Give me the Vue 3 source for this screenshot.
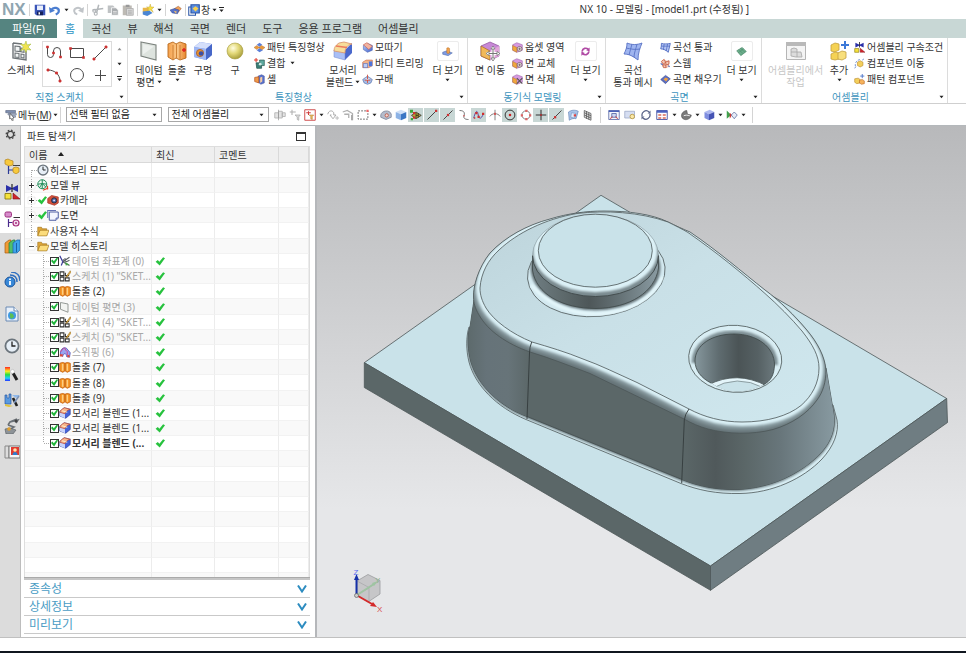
<script setup>
import { ref } from 'vue'

const quick = [
  { icon: 'save' }, { icon: 'undo', caret: true }, { icon: 'redo', sep: true },
  { icon: 'cut' }, { icon: 'copy' }, { icon: 'paste', sep: true },
  { icon: 'touch-star', caret: true, sep: true }, { icon: 'touch', sep: true },
]

const tabs = ['홈', '곡선', '뷰', '해석', '곡면', '렌더', '도구', '응용 프로그램', '어셈블리']
const activeTab = ref('홈')

const gallery = ['profile', 'rect', 'line', 'arc', 'circle', 'plus']

const groups = [
  {
    id: 'feature', label: '특징형상',
    items: [
      { kind: 'big', icon: 'datum', lines: ['데이텀', '평면'], caret: 'inline' },
      { kind: 'big', icon: 'extrude', lines: ['돌출'], caret: 'below' },
      { kind: 'big', icon: 'hole', lines: ['구멍'] },
      { kind: 'big', icon: 'sphere', lines: ['구'] },
      { kind: 'list', entries: [
        { icon: 'pattern', text: '패턴 특징형상' },
        { icon: 'unite', text: '결합', caret: true },
        { icon: 'shell', text: '셸' },
      ] },
      { kind: 'big', icon: 'blend', lines: ['모서리', '블렌드'], caret: 'inline' },
      { kind: 'list', entries: [
        { icon: 'chamfer', text: '모따기' },
        { icon: 'trim', text: '바디 트리밍' },
        { icon: 'draft', text: '구배' },
      ] },
      { kind: 'more', icon: 'more-feature' },
    ],
  },
  {
    id: 'sync', label: '동기식 모델링',
    items: [
      { kind: 'big', icon: 'move-face', lines: ['면 이동'] },
      { kind: 'list', entries: [
        { icon: 'face-a', text: '옵셋 영역' },
        { icon: 'face-a', text: '면 교체' },
        { icon: 'face-x', text: '면 삭제' },
      ] },
      { kind: 'more', icon: 'more-sync' },
    ],
  },
  {
    id: 'surface', label: '곡면',
    items: [
      { kind: 'big', icon: 'mesh', lines: ['곡선', '통과 메시'] },
      { kind: 'list', entries: [
        { icon: 'mesh-s', text: '곡선 통과' },
        { icon: 'swept', text: '스웹' },
        { icon: 'fill', text: '곡면 채우기' },
      ] },
      { kind: 'more', icon: 'more-surface' },
    ],
  },
  {
    id: 'assembly', label: '어셈블리',
    items: [
      { kind: 'big', icon: 'asm-work', lines: ['어셈블리에서', '작업'], disabled: true },
      { kind: 'big', icon: 'asm-add', lines: ['추가'], caret: 'below' },
      { kind: 'list', entries: [
        { icon: 'constraint', text: '어셈블리 구속조건' },
        { icon: 'comp-move', text: '컴포넌트 이동' },
        { icon: 'comp-pattern', text: '패턴 컴포넌트' },
      ] },
    ],
  },
]

const tools = [
  { icon: 't-sel' }, { icon: 't-arrow' }, { icon: 't-red', caret: true },
  { icon: 't-down' }, { icon: 't-corner' }, { icon: 't-dash', caret: true },
  { icon: 't-dome' }, { icon: 'cube-blue' },
  { icon: 't-snap', on: true }, { icon: 't-end', on: true }, { icon: 't-mid', on: true }, { icon: 't-curve' },
  { icon: 't-spline', on: true }, { icon: 't-cross' }, { icon: 't-center', on: true }, { icon: 't-quad' },
  { icon: 't-plus', on: true }, { icon: 't-oncurve', on: true }, { icon: 't-face' }, { icon: 't-grid', sep: true },
  { icon: 't-fit', wide: true }, { icon: 't-zoom', wide: true }, { icon: 't-rotate', wide: true }, { icon: 't-layout', wide: true, caret: true },
  { icon: 't-render', caret: true }, { icon: 'cube-deep', caret: true }, { icon: 't-clip', caret: true, sep: true },
]

const resources = [
  { id: 'gear', name: '설정' }, { id: 'r-asm', name: '어셈블리 탐색기' }, { id: 'constraint', name: '구속조건 탐색기' },
  { id: 'r-part', name: '파트 탐색기' }, { id: 'r-books', name: '재사용 라이브러리' }, { id: 'r-info', name: 'HD3D 도구' },
  { id: 'r-web', name: '웹 브라우저' }, { id: 'clock', name: '히스토리' }, { id: 'r-color', name: '시스템 재료' },
  { id: 'r-wizard', name: '프로세스 스튜디오' }, { id: 'r-robot', name: '가공 마법사' }, { id: 'r-roles', name: '역할' },
]

const rows = [
  { twig: 'tw-first', icon: 'clock', text: '히스토리 모드' },
  { twig: 'tw-plus', icon: 'globe', text: '모델 뷰' },
  { twig: 'tw-plus', tick: true, icon: 'camera', text: '카메라' },
  { twig: 'tw-plus', tick: true, icon: 'sheet', text: '도면' },
  { twig: 'tw-mid', icon: 'folder', text: '사용자 수식' },
  { twig: 'tw-minus', icon: 'folder', text: '모델 히스토리' },
  { child: true, icon: 'csys', text: '데이텀 좌표계 (0)', dim: true },
  { child: true, icon: 'sk', text: '스케치 (1) "SKET...', dim: true },
  { child: true, icon: 'ext-s', text: '돌출 (2)' },
  { child: true, icon: 'plane-s', text: '데이텀 평면 (3)', dim: true },
  { child: true, icon: 'sk', text: '스케치 (4) "SKET...', dim: true },
  { child: true, icon: 'sk', text: '스케치 (5) "SKET...', dim: true },
  { child: true, icon: 'sweep-s', text: '스위핑 (6)', dim: true },
  { child: true, icon: 'ext-s', text: '돌출 (7)' },
  { child: true, icon: 'ext-s', text: '돌출 (8)' },
  { child: true, icon: 'ext-s', text: '돌출 (9)' },
  { child: true, icon: 'blend-s', text: '모서리 블렌드 (1...' },
  { child: true, icon: 'blend-s', text: '모서리 블렌드 (1...' },
  { child: true, icon: 'blend-s', text: '모서리 블렌드 (...', bold: true, last: true },
]
const blanks = 9

const sections = ['종속성', '상세정보', '미리보기']
</script>

<template>
  <div class="app">
    <svg class="sprite" width="0" height="0" aria-hidden="true">
      <defs>
        <linearGradient id="gOr" x1="0" x2="1"><stop offset="0" stop-color="#f6a04a" /><stop offset=".5" stop-color="#fbc98a" /><stop offset="1" stop-color="#e8862c" /></linearGradient>
        <radialGradient id="gSph" cx=".38" cy=".32" r=".7"><stop offset="0" stop-color="#fffde0" /><stop offset=".5" stop-color="#e2d878" /><stop offset="1" stop-color="#a89e3c" /></radialGradient>
        <linearGradient id="gBl" x1="0" y1="0" x2="1" y2="1"><stop offset="0" stop-color="#b9cdf8" /><stop offset="1" stop-color="#3f60cc" /></linearGradient>
        <linearGradient id="gRain" x1="0" y1="0" x2="0" y2="1"><stop offset="0" stop-color="#f22" /><stop offset=".3" stop-color="#fe2" /><stop offset=".55" stop-color="#2d4" /><stop offset=".8" stop-color="#2cf" /><stop offset="1" stop-color="#23f" /></linearGradient>
      </defs>
      <symbol id="caret" viewBox="0 0 6 4"><path d="M0.6 0.6h4.8L3 3.4z" fill="#222" /></symbol>
      <symbol id="caret-bar" viewBox="0 0 6 7"><path d="M0 0h6v1H0zM0.500 3h5L3 6z" fill="#222" /></symbol>
      <symbol id="save" viewBox="0 0 16 16"><path d="M1 1h14v14H3l-2-2z" fill="#3a55b8" /><path d="M4 2h8v6H4z" fill="#e8eefb" /><path d="M4 10h8v5H4z" fill="#15205a" /><path d="M6 11h2v3H6z" fill="#fff" /></symbol>
      <symbol id="undo" viewBox="0 0 16 16"><path d="M3 8c3-5 11-3 10 2 0 2-2 3-4 4" fill="none" stroke="#4b7dd0" stroke-width="3" /><path d="M0 4l1 8 7-3z" fill="#4b7dd0" /></symbol>
      <symbol id="redo" viewBox="0 0 16 16"><path d="M13 8C10 3 2 5 3 10c0 2 2 3 4 4" fill="none" stroke="#c0c4c8" stroke-width="2.600" /><path d="M16 4l-1 8-7-3z" fill="#c0c4c8" /></symbol>
      <symbol id="cut" viewBox="0 0 16 16"><path d="M9 1L6 12M1 8l14-2" stroke="#b3b7ba" stroke-width="2" /><circle cx="5" cy="13" r="2" fill="none" stroke="#b3b7ba" stroke-width="1.500" /><circle cx="3" cy="9" r="2" fill="none" stroke="#b3b7ba" stroke-width="1.500" /></symbol>
      <symbol id="copy" viewBox="0 0 16 16"><path d="M1 2h7l2 2v8H1z" fill="#bfc2c4" /><path d="M6 5h6l3 3v7H6z" fill="#aaadb0" stroke="#fff" /><path d="M8 10h5M8 12h5" stroke="#e8e8e8" /></symbol>
      <symbol id="paste" viewBox="0 0 16 16"><path d="M1 2h12v13H1z" fill="#bdbab4" /><path d="M5 1h5v3H5z" fill="#999" /><path d="M6 6h9v9H6z" fill="#d5d5d5" stroke="#aaa" /><path d="M8 9h5M8 11h5M8 13h5" stroke="#aaa" /></symbol>
      <symbol id="touch-star" viewBox="0 0 16 16"><path d="M1 5h8v6H1z" fill="#e9b64a" /><path d="M11 0l1 4 4 0-3 3 2 4-4-3-4 2 2-4-3-2h4z" fill="#f7e04a" stroke="#b99a20" stroke-width=".5" /><path d="M1 10l9-1 4 3-7 4-6-2z" fill="#4b86d4" /></symbol>
      <symbol id="touch" viewBox="0 0 16 16"><path d="M6 6l5-3 4 3-4 5z" fill="#f0a25a" stroke="#8a4a2a" stroke-width=".6" /><path d="M0 8l6-2 6 2-2 5-7-1z" fill="#5672c8" stroke="#2b3c86" stroke-width=".6" /><path d="M5 9l4 1-1 3z" fill="#f4c06a" /></symbol>
      <symbol id="window" viewBox="0 0 16 16"><path d="M1 4h9v11H1z" fill="#fff" stroke="#2b57a8" stroke-width="1.400" /><path d="M4 1h11v11H4z" fill="#5d8fe0" stroke="#2b57a8" stroke-width="1.600" /><path d="M10 3l4 3-4 4-4-4z" fill="#f6d050" /></symbol>

      <symbol id="sketch" viewBox="0 0 20 20"><path d="M2 2l9 1M2 2v15l13 2v-9" fill="none" stroke="#6d7377" stroke-width="1.400" /><path d="M4 5l5 .6v5L4 10zM4 12l4 .5v4L4 16zM10 13l3 .4V17l-3-.4zM10 7l3 .4v4l-3-.5z" fill="#f2f5f5" stroke="#6d7377" stroke-width="1.100" /><path d="M15 0l1 4 4-1-3 3 3 3-4-.5-1 3-1.500-3-4 1 3-3.500-3-3 4 .5z" fill="#f1e34e" stroke="#a8bf48" stroke-width=".6" /></symbol>
      <symbol id="profile" viewBox="0 0 16 16"><path d="M1.500 2v7.500a3 3 0 006 0V6a3.500 3.500 0 017 0v5" fill="none" stroke="#4a4a4a" /><path d="M.5 1h2v2h-2zM6.500 7h2v2h-2zM13.500 11h2v2h-2z" fill="#c33" stroke="#c33" stroke-width=".6" /></symbol>
      <symbol id="rect" viewBox="0 0 16 16"><path d="M1.500 3.500h13v9h-13z" fill="none" stroke="#4a4a4a" /><path d="M.5 2.500h2v2h-2zM13.500 11.500h2v2h-2z" fill="#c33" stroke="#c33" stroke-width=".6" /></symbol>
      <symbol id="line" viewBox="0 0 16 16"><path d="M2 14L14 2" stroke="#4a4a4a" /><path d="M1 13h2v2H1zM13 1h2v2h-2z" fill="#c33" stroke="#c33" stroke-width=".8" /></symbol>
      <symbol id="arc" viewBox="0 0 16 16"><path d="M2 3c7 0 12 5 12 11" fill="none" stroke="#4a4a4a" /><path d="M1 2h2v2H1zM13 13h2v2h-2zM9.500 5h2v2h-2z" fill="#c33" stroke="#c33" stroke-width=".8" /></symbol>
      <symbol id="circle" viewBox="0 0 16 16"><circle cx="8" cy="8" r="6.500" fill="none" stroke="#4a4a4a" /></symbol>
      <symbol id="plus" viewBox="0 0 16 16"><path d="M8.500 3v11M3 8.500h11" stroke="#4a4a4a" /></symbol>

      <symbol id="datum" viewBox="0 0 20 20"><path d="M2 1l15 3v15L2 15z" fill="#dde3de" stroke="#7b827d" stroke-width="1.100" /><path d="M4 3l11 2.500-11 8z" fill="#fff" opacity=".45" /></symbol>
      <symbol id="extrude" viewBox="0 0 20 20"><path d="M1 3l5-2 3 2 4-2 6 2v14l-6 2-4-2-3 2-5-3z" fill="url(#gOr)" stroke="#b86a1e" stroke-width=".9" /><path d="M6 4v14M9.500 3v14M13 4v14" stroke="#c97a2c" stroke-width=".9" /><path d="M15 9h4M17 7v4" stroke="#d22" stroke-width="1.400" /></symbol>
      <symbol id="hole" viewBox="0 0 20 20"><path d="M1 6l6-5 12 2v11l-6 5-12-3z" fill="#6f8fe6" /><path d="M1 6l6-5 12 2-6 5z" fill="#d5dffb" /><path d="M13 8l6-5v11l-6 5z" fill="#4767c8" /><path d="M1 6l12 2v11L1 16z" fill="#9fb7f4" /><circle cx="7" cy="12" r="3.600" fill="#e8902c" stroke="#a4602c" stroke-width=".8" /><circle cx="8" cy="12.500" r="2.300" fill="#3a4fa8" /></symbol>
      <symbol id="sphere" viewBox="0 0 20 20"><circle cx="10" cy="10" r="8" fill="url(#gSph)" stroke="#a59b3c" stroke-width=".6" /></symbol>
      <symbol id="blend" viewBox="0 0 20 20"><path d="M12 9l7-7v10l-7 7z" fill="#4a68cc" /><path d="M1 9h11v10L1 16z" fill="#a9bff6" stroke="#6d86cc" stroke-width=".5" /><path d="M1 10c0-4 2-6 5-8l5-1 8 2c-5 1-7 4-7 9z" fill="#f7dd9a" stroke="#d8906a" stroke-width=".8" /><path d="M3 5l11 1.500" stroke="#ec7a5c" stroke-width="1.600" /></symbol>
      <symbol id="pattern" viewBox="0 0 16 16"><path d="M8 1l4 3-4 3-4-3z" fill="#5b7ed8" /><path d="M11 5l5 3-5 4-4-4z" fill="#e89a3c" stroke="#a05a1c" stroke-width=".5" /><path d="M0 8l4-3 4 3-4 3z" fill="#e89a3c" stroke="#a05a1c" stroke-width=".5" /><path d="M4 12l4-3 5 3-5 3z" fill="#5b7ed8" /></symbol>
      <symbol id="unite" viewBox="0 0 16 16"><path d="M3 0v6M0 3h6" stroke="#e03a2a" stroke-width="1.500" /><path d="M3 7h8v8H4z" fill="#3a7f76" stroke="#1f4f4c" /><path d="M8 3h7v8H9z" fill="#5faaa0" stroke="#27584f" /><circle cx="9" cy="9" r="2" fill="#cfe8e2" /></symbol>
      <symbol id="shell" viewBox="0 0 16 16"><path d="M6 3l5-2 4 2v10l-5 2-4-3z" fill="#5a72cc" stroke="#2a3c84" stroke-width=".6" /><path d="M1 5l6-1v9l-6-2z" fill="#f09a4a" stroke="#b3501c" /><path d="M9 5l3-1v7l-3 2z" fill="#f7cda2" /></symbol>
      <symbol id="chamfer" viewBox="0 0 16 16"><path d="M2 5l6-3 7 3v7l-7 3-6-4z" fill="url(#gBl)" stroke="#3a52a4" stroke-width=".7" /><path d="M2 4l5-3 8 5-5 5z" fill="#f2b3a0" stroke="#c9553e" stroke-width=".8" /></symbol>
      <symbol id="trim" viewBox="0 0 16 16"><path d="M1 6l5-3h9v8l-5 3H1z" fill="#f4b48a" stroke="#c0603c" stroke-width=".8" /><path d="M10 5h5v7h-5z" fill="#4d74dc" /><path d="M2 8h6v6H2z" fill="#b8ccf8" stroke="#3a58b4" stroke-width=".7" /></symbol>
      <symbol id="draft" viewBox="0 0 16 16"><path d="M1 8l7-5 7 5-2 5-5 2-5-2z" fill="#a4bce6" stroke="#44609c" stroke-width=".8" /><path d="M8 1v12M4 9h8" stroke="#d6503c" stroke-width="1.300" /><path d="M5 6l3 2 3-2" fill="none" stroke="#fff" /></symbol>
      <symbol id="more-feature" viewBox="0 0 16 16"><path d="M1 9l6-2 8 3-6 4-8-2z" fill="#7d9be2" stroke="#47609f" stroke-width=".7" /><path d="M7 3c2-1 4 0 4 1v6c-1 1-3 1-4 0z" fill="#f3a34c" stroke="#b0661f" stroke-width=".7" /></symbol>
      <symbol id="move-face" viewBox="0 0 20 20"><path d="M1 5l9-4 9 4v10l-9 4-9-4z" fill="#c789d6" stroke="#8c4f9c" stroke-width=".7" /><path d="M1 5l9 5v9l-9-4z" fill="#f0b85a" stroke="#a86a20" stroke-width=".7" /><path d="M10 10l9-5v10l-9 4z" fill="#e3a5da" /><path d="M13 6v13M6.500 12.500h13" stroke="#fff" stroke-width="3" /><path d="M13 6v13M6.500 12.500h13" stroke="#777" stroke-width="1" /><path d="M13 5l2 3h-4zM13 20l2-3h-4zM6 12.500l3-2v4zM20 12.500l-3-2v4z" fill="#fff" stroke="#666" stroke-width=".7" /></symbol>
      <symbol id="face-a" viewBox="0 0 16 16"><path d="M1 4l6-3 8 3v8l-8 3-6-3z" fill="#d79ae0" stroke="#8c4f9c" stroke-width=".7" /><path d="M1 5l6 3v7l-6-3z" fill="#f0a83e" stroke="#a86a20" stroke-width=".6" /><circle cx="11" cy="10" r="3.500" fill="#efe7ea" stroke="#6b5058" /><path d="M9 10h4M11 8v4" stroke="#6b5058" /></symbol>
      <symbol id="face-x" viewBox="0 0 16 16"><path d="M1 4l6-3 8 3v8l-8 3-6-3z" fill="#d79ae0" stroke="#8c4f9c" stroke-width=".7" /><path d="M1 5l6 3v7l-6-3z" fill="#f0a83e" stroke="#a86a20" stroke-width=".6" /><path d="M7 6l8 8M15 6l-8 8" stroke="#555" stroke-width="1.700" /></symbol>
      <symbol id="more-sync" viewBox="0 0 16 16"><path d="M3 8c1-5 6-6 9-3M13 8c-1 5-6 6-9 3" fill="none" stroke="#b04aa4" stroke-width="2.400" /><path d="M14 2v6l-5-2zM2 14V8l5 2z" fill="#b04aa4" /></symbol>
      <symbol id="mesh" viewBox="0 0 20 20"><path d="M4 2c5 2 10 2 15 0-2 5-4 10-4 17-4-2-8-6-14-6 2-4 3-7 3-11z" fill="#9fb5f0" /><path d="M4 2c5 2 10 2 15 0-2 5-4 10-4 17M1 13c6 0 10 3 14 6M4 2c0 4-1 7-3 11M3 7c5 1 9 2 14 1M9 3c-1 4-2 7-3 11M14 3c-1 5-3 9-3 13" fill="none" stroke="#5872c4" stroke-width=".9" /></symbol>
      <symbol id="mesh-s" viewBox="0 0 16 16"><path d="M2 2c4 1 9 1 13 0l-3 13c-3-3-7-5-11-5 1-3 1-5 1-8z" fill="#b3c4f4" stroke="#4461bc" stroke-width="1.200" /><path d="M2 6h12M6 3L5 11M11 3L9 13" fill="none" stroke="#4461bc" stroke-width="1" /></symbol>
      <symbol id="swept" viewBox="0 0 16 16"><path d="M2 5l4-3 4 2 4 0-1 5 1 4-5 1-5-1-2-4z" fill="#f3c8b8" /><path d="M2 5l4-3 2 4-3 3zM8 6l5-2 0 5-4 1zM4 10l4 0 1 4-4 0z" fill="none" stroke="#c4573c" stroke-width="1.200" /><path d="M1 8l3 2M12 11l2 2" stroke="#4a6ac0" stroke-width="1.500" /></symbol>
      <symbol id="fill" viewBox="0 0 16 16"><path d="M1 8l7-6 7 5-7 7z" fill="#5a6fc4" stroke="#313f84" stroke-width=".8" /><path d="M5 8l3-3 4 2-3 4z" fill="#f0a040" /></symbol>
      <symbol id="more-surface" viewBox="0 0 16 16"><path d="M1 7l8-5 6 6-8 6z" fill="#6cae8c" stroke="#3d7c5c" stroke-width=".8" /><path d="M4 5l6 6M6 3l7 6M3 10l8-6" stroke="#3d7c5c" stroke-width=".6" /></symbol>
      <symbol id="asm-work" viewBox="0 0 20 20"><path d="M.5 1.500h19v17H.5z" fill="#f4f4f4" stroke="#b5b5b5" /><path d="M0 1h20v4H0z" fill="#b9b9b9" /><path d="M5 8l3-1 3 1v3l4 0 1 5-6 0-5-1z" fill="#dcdcdc" stroke="#a6a6a6" stroke-width=".8" /><path d="M5 11l6 0v5" fill="none" stroke="#a6a6a6" stroke-width=".8" /></symbol>
      <symbol id="asm-add" viewBox="0 0 20 20"><path d="M2 4l4-2 4 1v6l-4 2-4-1z" fill="#f5d254" stroke="#c4a03c" stroke-width=".8" /><path d="M2 13l4-2 4 1v6l-4 1-4-1z" fill="#f5d254" stroke="#c4a03c" stroke-width=".8" /><path d="M9 12l4-2 4 1v6l-4 2-4-1z" fill="#f8df7c" stroke="#c4a03c" stroke-width=".8" /><path d="M16 0v8M12 4h8" stroke="#3d79d8" stroke-width="2" /></symbol>
      <symbol id="constraint" viewBox="0 0 16 16"><path d="M2 1l6 3 6-3v7L8 5 2 8z" fill="#2a2fa8" /><path d="M8 0v8" stroke="#222" stroke-width="1.200" /><path d="M1 9.500h6v5.500H1z" fill="#f6e23a" stroke="#8a7a10" stroke-width=".9" /><path d="M9 15V9l7 6z" fill="#d2222a" stroke="#7a1014" stroke-width=".6" /></symbol>
      <symbol id="comp-move" viewBox="0 0 16 16"><path d="M5 6l4-2 4 2v5l-4 2-4-2z" fill="#f3cf5c" stroke="#b3801c" stroke-width=".8" /><path d="M1 15l2-3M12 3l3-2M2 12c-1-5 2-9 7-10" fill="none" stroke="#5a7fc8" stroke-width="1.200" stroke-dasharray="3 2" /></symbol>
      <symbol id="comp-pattern" viewBox="0 0 16 16"><path d="M1 7l5-1 3 2v5l-5 1-3-2z" fill="#f3cf5c" stroke="#b3801c" stroke-width=".8" /><path d="M8 9l4-1 3 2v4l-4 1-3-2z" fill="#f6b35c" stroke="#b3601c" stroke-width=".8" /><path d="M12 0v6M9 3h6" stroke="#4a72c8" stroke-width="1.300" /></symbol>

      <symbol id="menu" viewBox="0 0 16 16"><path d="M1 2h13v3H1z" fill="#7e8fb0" stroke="#55617c" stroke-width=".8" /><path d="M4 6h11v2H4zM6 9h8v2H6z" fill="#b9c4d8" stroke="#55617c" stroke-width=".7" /><path d="M7 6l5 6-2 .5L11 15H9l-1-3-2 1z" fill="#fff" stroke="#333" stroke-width=".8" /></symbol>
      <symbol id="t-sel" viewBox="0 0 16 16"><path d="M1 5h5v7H1zM6 3h5v9H6zM11 5h4v5h-4z" fill="#e4e4e4" stroke="#aaa" /><path d="M6 1v14" stroke="#999" /></symbol>
      <symbol id="t-arrow" viewBox="0 0 16 16"><path d="M1 4h8M4 1v7" stroke="#b0b0b0" stroke-width="1.400" /><path d="M8 8h7l-2 2.500V15l-2-1v-3.500z" fill="#ddd" stroke="#a8a8a8" /></symbol>
      <symbol id="t-red" viewBox="0 0 16 16"><path d="M1 1h14v14H1z" fill="#fff" stroke="#cf4c4c" stroke-width="1.300" /><path d="M3 5h6M6 3v5" stroke="#cf3c3c" stroke-width="1.400" /><path d="M7 8h6l-2 2v4l-2-1v-3z" fill="#f0c060" stroke="#a9742c" stroke-width=".7" /></symbol>
      <symbol id="t-down" viewBox="0 0 16 16"><path d="M1 7c1-5 6-6 8-2v3h3l-4 5-4-5h2" fill="none" stroke="#a4a4a4" stroke-width="1.200" /><path d="M11 12h5M13.500 9.500v5" stroke="#bbb" stroke-width="1.300" /></symbol>
      <symbol id="t-corner" viewBox="0 0 16 16"><path d="M1 4l6-2 7 4v9M3 7l6 0 0 5" fill="none" stroke="#b0b0b0" stroke-width="1.700" /><path d="M13 8v7" stroke="#999" stroke-width="1.500" /></symbol>
      <symbol id="t-dash" viewBox="0 0 16 16"><path d="M1.500 2.500h13v11h-13z" fill="none" stroke="#666" stroke-width="1.200" stroke-dasharray="2.500 1.500" /><path d="M12.500 1h3v3h-3z" fill="#e66" /></symbol>
      <symbol id="t-dome" viewBox="0 0 16 16"><path d="M1 8c1-6 12-8 14-1v4l-7 3-7-3z" fill="#b4bccc" stroke="#5f6880" stroke-width=".8" /><circle cx="9" cy="8.500" r="2.200" fill="#f6d8d0" stroke="#b54a38" /></symbol>
      <symbol id="cube-blue" viewBox="0 0 16 16"><path d="M1 4l7-3 7 3-7 3z" fill="#cfe0f8" /><path d="M1 4l7 3v8l-7-3z" fill="#8db3e6" /><path d="M8 7l7-3v8l-7 3z" fill="#3a76c4" /></symbol>
      <symbol id="cube-deep" viewBox="0 0 16 16"><path d="M2 4l7-3 6 3-7 3z" fill="#aeb8f0" /><path d="M2 4l6 3v8l-6-3z" fill="#7f8ee0" /><path d="M8 7l7-3v8l-7 3z" fill="#4553b4" /></symbol>
      <symbol id="t-snap" viewBox="0 0 16 16"><path d="M8 4l7 4.500-7 4.500-6-4.500z" fill="#b8a838" stroke="#333" stroke-width="1" /><path d="M8 8.500l3 0M11 5.500v6M8 5v7" stroke="#222" stroke-width="1" /><path d="M0 1h4v4H0zM1 12h3v3H1z" fill="#3aa83a" /><path d="M4 4h3v3H4zM4 10h3v3H4z" fill="#d03030" /></symbol>
      <symbol id="t-end" viewBox="0 0 16 16"><path d="M2 14L14 2" stroke="#444" stroke-width="1.300" /><path d="M12 1h3v3h-3z" fill="#c33" /></symbol>
      <symbol id="t-mid" viewBox="0 0 16 16"><path d="M2 14L14 2" stroke="#444" stroke-width="1.300" /><path d="M6.500 6.500h3v3h-3z" fill="#c33" /></symbol>
      <symbol id="t-oncurve" viewBox="0 0 16 16"><path d="M2 14L14 2" stroke="#444" stroke-width="1.300" /><path d="M4 9.500h3v3H4z" fill="#c33" /></symbol>
      <symbol id="t-curve" viewBox="0 0 16 16"><path d="M2 2c7 0 7 4 6 7s1 5 6 5" fill="none" stroke="#666" stroke-width="1.200" /><path d="M7 8h2v2H7z" fill="#c66" /></symbol>
      <symbol id="t-spline" viewBox="0 0 16 16"><path d="M1 12c3-12 5-10 6-4s4 6 7-2" fill="none" stroke="#5a4aa8" stroke-width="1.300" /><path d="M3 4h3v3H3zM6 9h3v3H6zM12 5h3v3h-3zM1 11h2v2H1z" fill="#d03030" /></symbol>
      <symbol id="t-cross" viewBox="0 0 16 16"><path d="M8 1v14M1 10c3-5 11-5 14 0" fill="none" stroke="#777" stroke-width="1.200" /><path d="M7 5h2v3H7z" fill="#d44" /></symbol>
      <symbol id="t-center" viewBox="0 0 16 16"><circle cx="8" cy="8" r="6.500" fill="none" stroke="#333" stroke-width="1.300" /><path d="M6.500 6.500h3v3h-3z" fill="#c22" /></symbol>
      <symbol id="t-quad" viewBox="0 0 16 16"><circle cx="8" cy="8" r="5.500" fill="none" stroke="#777" stroke-width="1.200" /><path d="M7 1h3v3H7zM7 12h3v3H7zM1 7h3v3H1zM12 7h3v3h-3z" fill="#d66" /></symbol>
      <symbol id="t-plus" viewBox="0 0 16 16"><path d="M8 1v14M1 8h14" stroke="#333" stroke-width="1.400" /><path d="M7 7h2v2H7z" fill="#c22" /></symbol>
      <symbol id="t-face" viewBox="0 0 16 16"><path d="M2 4c4-3 9-3 13-1l-3 10c-3-1-6 0-9 2z" fill="#a9c4ea" stroke="#5a7aae" stroke-width=".8" /><path d="M6 5l6 1-2 6-5-1z" fill="#dceafc" stroke="#5a7aae" stroke-width=".6" /><path d="M9 7h3v3H9z" fill="#d44" /></symbol>
      <symbol id="t-grid" viewBox="0 0 16 16"><path d="M3 2l9 4v9l-9-4zM3 5l9 4M3 8l9 4M6 3v10M9 5v9" fill="#ddd" stroke="#555" /></symbol>
      <symbol id="t-fit" viewBox="0 0 16 16"><path d="M1 2h14v12H1z" fill="#f4f6fc" stroke="#4a5a9c" /><path d="M1 2h14v2H1z" fill="#4a62b8" /><path d="M5 6h6v5H5z" fill="#cdd8f4" stroke="#4a5a9c" /><path d="M3 13l3-3M13 13l-3-3" stroke="#c44" stroke-width="1.400" /></symbol>
      <symbol id="t-zoom" viewBox="0 0 16 16"><path d="M1 3h13v9H1z" fill="#d6def2" stroke="#9aa6c4" /><circle cx="11" cy="10" r="3" fill="#fae8a8" stroke="#b39030" /></symbol>
      <symbol id="t-rotate" viewBox="0 0 16 16"><path d="M3 10C1 4 8 0 12 4M13 6c2 6-5 10-9 6" fill="none" stroke="#5a6488" stroke-width="1.700" /><path d="M14 2v4h-4zM2 14v-4h4z" fill="#5a6488" /></symbol>
      <symbol id="t-layout" viewBox="0 0 16 16"><path d="M1 2h14v12H1z" fill="#fff" stroke="#4a55a0" stroke-width="1.200" /><path d="M1 2h14v3H1z" fill="#4a62c0" /><path d="M3 7h4v2H3zM9 7h4v2H9zM3 11h4v2H3zM9 11h4v2H9z" fill="#d86a5a" /></symbol>
      <symbol id="t-render" viewBox="0 0 16 16"><path d="M2 9c0-5 5-7 7-7l1 5 5 1c0 4-5 7-9 6-3-1-4-3-4-5z" fill="#7a7a7a" stroke="#3f3f3f" stroke-width=".7" /><path d="M5 9c2-1 5-1 8 0" stroke="#eee" fill="none" stroke-width="1.300" /></symbol>
      <symbol id="t-clip" viewBox="0 0 16 16"><path d="M1 2l6 6-6 5z" fill="#3fa04c" /><path d="M5 5l3 3-3 5z" fill="#d03a34" /><path d="M11 4l4 4-4 5-4-5z" fill="#e6ecf8" stroke="#5a6c9c" /></symbol>

      <symbol id="gear" viewBox="0 0 16 16"><circle cx="8" cy="8" r="3.800" fill="none" stroke="#444" stroke-width="1.500" /><circle cx="8" cy="8" r="5.300" fill="none" stroke="#444" stroke-width="1.500" stroke-dasharray="2 2.160" /></symbol>
      <symbol id="r-asm" viewBox="0 0 16 16"><path d="M1 2l3-1 2 1 3 1v4l-4 1-4-2z" fill="#f7c93c" stroke="#b2821c" stroke-width=".7" /><path d="M4.500 8v8M4.500 12h5" fill="none" stroke="#2b3a96" stroke-width="1.200" /><path d="M9 7.500h7" stroke="#444" /><path d="M9 10l3-1 3 1v4l-3 2-3-2z" fill="#f7c93c" stroke="#b2821c" stroke-width=".7" /></symbol>
      <symbol id="r-part" viewBox="0 0 16 16"><rect x="1" y="1" width="6.500" height="5" rx="1.500" fill="#d78ccc" stroke="#9c2f7c" /><path d="M9.500 6.500H16" stroke="#333" /><path d="M4.500 8v8M4.500 11.500h4" stroke="#4a2a8c" stroke-width="1.200" /><circle cx="12" cy="12" r="3" fill="#f4dcf0" stroke="#a8327e" stroke-width="1.200" /><circle cx="12" cy="12" r="1" fill="#a8327e" /></symbol>
      <symbol id="r-books" viewBox="0 0 16 16"><path d="M1 5l4-3h2v11l-2 2H1z" fill="#ef9b35" stroke="#a65c14" stroke-width=".7" /><path d="M5 5l4-3h2v11l-2 2H5z" fill="#4fbf6a" stroke="#227a3c" stroke-width=".7" /><path d="M9 5l4-3h3v10l-3 3H9z" fill="#3fa4ea" stroke="#1b62a4" stroke-width=".7" /><path d="M12.500 5v9" stroke="#1b62a4" /></symbol>
      <symbol id="r-info" viewBox="0 0 16 16"><circle cx="6" cy="10" r="5" fill="#3888d8" stroke="#1a5298" /><path d="M6 9v4M6 6.500v1.500" stroke="#fff" stroke-width="1.800" /><path d="M6 3c5 0 7 3 7 7M7 0c6 0 9 4 9 9" fill="none" stroke="#2f6fc0" stroke-width="1.500" /></symbol>
      <symbol id="r-web" viewBox="0 0 16 16"><path d="M2 1h8l4 4v10H2z" fill="#e8f0fa" stroke="#6a8ab4" /><path d="M10 1v4h4" fill="#fff" stroke="#6a8ab4" /><circle cx="8" cy="9.500" r="4" fill="#3f9ae0" /><path d="M6 7l3 1 1 3-3 2-1-2z" fill="#59bf54" /></symbol>
      <symbol id="clock" viewBox="0 0 16 16"><circle cx="8" cy="8" r="6.600" fill="#e6eef6" stroke="#6b747c" stroke-width="1.800" /><path d="M8 3.500V8h3.500" fill="none" stroke="#222" stroke-width="1.300" /></symbol>
      <symbol id="r-color" viewBox="0 0 16 16"><path d="M1 1h5v14H1z" fill="url(#gRain)" /><path d="M9 7l4 7" stroke="#222" stroke-width="3" /><path d="M6 5l3-2 2 3-3 2z" fill="#fff" stroke="#aaa" stroke-width=".5" /></symbol>
      <symbol id="r-wizard" viewBox="0 0 16 16"><path d="M1 12V3h2v3h2V2h2v10z" fill="#5a9ae0" stroke="#2a5aa4" stroke-width=".7" /><path d="M1 12l8 2-4 1-4-1z" fill="#e0c23c" /><path d="M8 3h8l-4 3z" fill="#8fb8ea" /><path d="M9 6l4 8" stroke="#222" stroke-width="2.600" /><path d="M15 4l-5 7" stroke="#7b93b8" stroke-width="1.600" /></symbol>
      <symbol id="r-robot" viewBox="0 0 16 16"><path d="M13 1l-7 3-2 3M6 4l8-2-2 3M4 7l6 2-5 3" fill="none" stroke="#6a7076" stroke-width="1.600" /><path d="M1 11l5-1 6 2-3 4H2z" fill="#8d9398" stroke="#555b60" stroke-width=".6" /><circle cx="5" cy="11" r="1.800" fill="#e0a030" /><circle cx="12" cy="3" r="1.500" fill="#444" /></symbol>
      <symbol id="r-roles" viewBox="0 0 16 16"><path d="M1 2h4v12H1z" fill="#ddd" stroke="#888" /><path d="M5 2h11v12H5z" fill="#f6f6f6" stroke="#777" /><path d="M7 3h8v8H7z" fill="#e03a30" /><circle cx="11" cy="6" r="1.800" fill="#ffe3a8" /><path d="M8.500 11c0-4 5-4 5 0z" fill="#2f7fd0" /></symbol>

      <symbol id="tw-first" viewBox="0 0 12 16"><path d="M6.500 8v8M7 8.500h5" stroke="#aaa" stroke-dasharray="1 1" fill="none" /></symbol>
      <symbol id="tw-mid" viewBox="0 0 12 16"><path d="M6.500 0v16M7 8.500h5" stroke="#aaa" stroke-dasharray="1 1" fill="none" /></symbol>
      <symbol id="tw-last" viewBox="0 0 12 16"><path d="M6.500 0v8M7 8.500h5" stroke="#aaa" stroke-dasharray="1 1" fill="none" /></symbol>
      <symbol id="tw-plus" viewBox="0 0 12 16"><path d="M6.500 0v16M9 8.500h3" stroke="#aaa" stroke-dasharray="1 1" /><path d="M3 5h7v7H3z" fill="#fff" stroke="#ddd" stroke-width=".5" /><path d="M4 8.500h5M6.500 6v5" stroke="#333" /></symbol>
      <symbol id="tw-minus" viewBox="0 0 12 16"><path d="M6.500 0v4M9 8.500h3" stroke="#aaa" stroke-dasharray="1 1" /><path d="M3 5h7v7H3z" fill="#fff" stroke="#ddd" stroke-width=".5" /><path d="M4 8.500h5" stroke="#555" /></symbol>
      <symbol id="tick" viewBox="0 0 16 16"><path d="M1 9l3.500-2.500L7 9 13 2l3 1.500L7.500 15z" fill="#27c23e" /></symbol>
      <symbol id="globe" viewBox="0 0 16 16"><circle cx="7" cy="7" r="6" fill="#eaf7ef" stroke="#1e8a56" stroke-width="1.300" /><path d="M7 1v12M1 7l6-1 6 1M3 12l4-6 5 5" fill="none" stroke="#1e8a56" stroke-width="1.300" /><path d="M8 15l7-3M14 9v5" stroke="#e0442a" stroke-width="1.600" /></symbol>
      <symbol id="camera" viewBox="0 0 16 16"><path d="M1 6l5-4 9 2v8l-5 3-9-3z" fill="#d4503c" stroke="#a83828" /><circle cx="9.500" cy="8.500" r="3.500" fill="#4a5c9c" stroke="#222" /><circle cx="9.500" cy="8.500" r="1.300" fill="#cfe0ff" /></symbol>
      <symbol id="sheet" viewBox="0 0 16 16"><path d="M1 12V2h11" fill="none" stroke="#6472b4" stroke-width="1.400" /><path d="M3 4h12v8l-3 3H3z" fill="#f3f6ff" stroke="#4a5aa0" stroke-width="1.300" /><path d="M12 15v-3h3" fill="#b9c4ec" stroke="#4a5aa0" /></symbol>
      <symbol id="folder" viewBox="0 0 16 16"><path d="M1 3h5l1 2h6v9H1z" fill="#e0a83a" stroke="#9a6c14" stroke-width=".8" /><path d="M4 7h12l-3 7.500H1z" fill="#fbdc7c" stroke="#9a6c14" stroke-width=".8" /></symbol>
      <symbol id="csys" viewBox="0 0 16 16"><path d="M5 9l9-6M5 9l9 5M5 6l5 3 4-2M8 4v5" fill="none" stroke="#5a5f64" stroke-width="1.400" /><path d="M1 1l4 8M5 9l-2 5" stroke="#3a3a98" stroke-width="1.600" /><path d="M8 9l6 4-5 1z" fill="#4aa04c" /></symbol>
      <symbol id="sk" viewBox="0 0 16 16"><path d="M1.500 2.500h5v5h-5zM1.500 9.500h5v5h-5zM8.500 10.500h5v4h-5zM8.500 3.500v4h5" fill="#fff" stroke="#333" stroke-width="1.400" /><path d="M15 1l-5 7-1 2 2-1 5-6z" fill="#e8b040" stroke="#7a5410" stroke-width=".6" /></symbol>
      <symbol id="ext-s" viewBox="0 0 16 16"><path d="M1 3l4-1 3 1 3-1 4 1v10l-4 2-3-2-3 2-4-2z" fill="#f79a2a" stroke="#c4600e" stroke-width="1.200" /><path d="M8 3v10" stroke="#b4530e" stroke-width="1.300" /><path d="M5 4v9M11 4v9" stroke="#fde0a8" stroke-width="1.300" /></symbol>
      <symbol id="plane-s" viewBox="0 0 16 16"><path d="M2 2l10 2v11L2 11z" fill="#f2f4f2" stroke="#8a908c" stroke-width="1.200" /></symbol>
      <symbol id="sweep-s" viewBox="0 0 16 16"><path d="M2 12c-1-8 4-11 8-9l5 6-1 6-4-1c0-5-4-5-5 0z" fill="#9aa4f0" stroke="#4a4cb0" /><path d="M2 8l4-5M7 2l3 5M11 12v-5" stroke="#d04a90" stroke-width="1.300" /><path d="M1 11h4v3H1zM11 12h3v3h-3z" fill="#e04a3a" /></symbol>
      <symbol id="blend-s" viewBox="0 0 16 16"><path d="M1 6l6-5 8 2v7l-6 5-8-3z" fill="#4663d8" stroke="#22358c" stroke-width=".8" /><path d="M1 7l7 2v6l-7-3z" fill="#c8d4fb" /><path d="M1 7c1-3 3-4 6-6l8 2c-4 1-6 3-7 6z" fill="#f7b48a" stroke="#c03c24" stroke-width=".8" /><path d="M4 5l7 2" stroke="#fff0c8" stroke-width="1.300" /></symbol>
    </svg>

    <header class="titlebar">
      <div class="quick">
        <strong class="logo">NX</strong>
        <i class="vr"></i>
        <template v-for="q in quick" :key="q.icon">
          <button class="tool" type="button" :aria-label="q.icon"><svg class="i12"><use :href="'#' + q.icon" /></svg></button>
          <button v-if="q.caret" class="drop" type="button" :aria-label="q.icon + ' 옵션'"><svg class="caret"><use href="#caret" /></svg></button>
          <i v-if="q.sep" class="vr"></i>
        </template>
        <button class="win" type="button"><svg class="i12"><use href="#window" /></svg><span>창</span><svg class="caret"><use href="#caret" /></svg></button>
        <button class="drop" type="button" aria-label="도구 모음 옵션"><svg class="caret-bar"><use href="#caret-bar" /></svg></button>
      </div>
      <h1 class="title">NX 10 - 모델링 - [model1.prt (수정됨) ]</h1>
    </header>

    <nav class="tabs">
      <button class="tab file" type="button">파일(F)</button>
      <button v-for="t in tabs" :key="t" type="button" class="tab" :class="{ active: t === activeTab }" @click="activeTab = t">{{ t }}</button>
    </nav>

    <div class="ribbon">
      <section class="group">
        <div class="body g-sketch">
          <button class="big" type="button"><svg class="i20"><use href="#sketch" /></svg><span>스케치</span></button>
          <div class="gallery">
            <button v-for="g in gallery" :key="g" type="button" :aria-label="g"><svg class="i16"><use :href="'#' + g" /></svg></button>
          </div>
          <div class="scroller">
            <button type="button" aria-label="위로"><svg class="caret up"><use href="#caret" /></svg></button>
            <button type="button" aria-label="아래로"><svg class="caret"><use href="#caret" /></svg></button>
            <button type="button" aria-label="더 보기"><svg class="caret-bar"><use href="#caret-bar" /></svg></button>
          </div>
        </div>
        <footer><span>직접 스케치</span><svg class="caret"><use href="#caret" /></svg></footer>
      </section>

      <section v-for="g in groups" :key="g.id" class="group">
        <div class="body" :class="'g-' + g.id">
          <template v-for="(it, n) in g.items" :key="n">
            <button v-if="it.kind === 'big'" class="big" type="button" :disabled="it.disabled">
              <svg class="i20"><use :href="'#' + it.icon" /></svg>
              <span v-for="(l, k) in it.lines" :key="l">{{ l }}<svg v-if="it.caret === 'inline' && k === 1" class="caret"><use href="#caret" /></svg></span>
              <span v-if="it.caret === 'below'" class="below"><svg class="caret"><use href="#caret" /></svg></span>
            </button>
            <ul v-else-if="it.kind === 'list'" class="list">
              <li v-for="e in it.entries" :key="e.text">
                <button type="button"><svg class="i11"><use :href="'#' + e.icon" /></svg><span>{{ e.text }}</span><svg v-if="e.caret" class="caret"><use href="#caret" /></svg></button>
              </li>
            </ul>
            <button v-else class="big more" type="button">
              <span class="frame"><svg class="i11"><use :href="'#' + it.icon" /></svg></span>
              <span>더 보기</span>
              <span class="below"><svg class="caret"><use href="#caret" /></svg></span>
            </button>
          </template>
        </div>
        <footer><span>{{ g.label }}</span><svg class="caret"><use href="#caret" /></svg></footer>
      </section>
    </div>

    <div class="toolbar">
      <button class="menu" type="button"><svg class="i12"><use href="#menu" /></svg><span>메뉴(<u>M</u>)</span><svg class="caret"><use href="#caret" /></svg></button>
      <i class="vr"></i>
      <label class="picker narrow"><select aria-label="선택 필터"><option>선택 필터 없음</option></select><svg class="caret"><use href="#caret" /></svg></label>
      <label class="picker"><select aria-label="선택 범위"><option>전체 어셈블리</option></select><svg class="caret"><use href="#caret" /></svg></label>
      <template v-for="t in tools" :key="t.icon">
        <button class="tool" :class="{ on: t.on, wide: t.wide }" type="button" :aria-label="t.icon"><svg class="i12"><use :href="'#' + t.icon" /></svg></button>
        <button v-if="t.caret" class="drop" type="button" :aria-label="t.icon + ' 옵션'"><svg class="caret"><use href="#caret" /></svg></button>
        <i v-if="t.sep" class="vr gap"></i>
      </template>
    </div>

    <main class="work">
      <nav class="resources">
        <button v-for="r in resources" :key="r.id" type="button" :class="[r.id, { current: r.id === 'r-part' }]" :aria-label="r.name"><svg><use :href="'#' + r.id" /></svg></button>
      </nav>

      <aside class="panel">
        <div class="panel-head"><h2>파트 탐색기</h2><button type="button" class="maximize" aria-label="최대화"></button></div>
        <div class="tree">
          <table>
            <colgroup><col class="c-name" /><col class="c-new" /><col class="c-note" /><col /></colgroup>
            <thead><tr><th>이름 <svg class="sort" viewBox="0 0 6 4"><path d="M0 4h6L3 0z" fill="#222" /></svg></th><th>최신</th><th>코멘트</th><th></th></tr></thead>
            <tbody>
              <tr v-for="(r, n) in rows" :key="n">
                <td>
                  <div class="node" :class="{ child: r.child, dim: r.dim, bold: r.bold }">
                    <svg class="twig"><use :href="'#' + (r.child ? (r.last ? 'tw-last' : 'tw-mid') : r.twig)" /></svg>
                    <input v-if="r.child" type="checkbox" checked :aria-label="r.text" />
                    <svg v-if="r.tick" class="i10"><use href="#tick" /></svg>
                    <svg class="i12"><use :href="'#' + r.icon" /></svg>
                    <span>{{ r.text }}</span>
                  </div>
                </td>
                <td><svg v-if="r.child" class="i10"><use href="#tick" /></svg></td>
                <td></td><td></td>
              </tr>
              <tr v-for="n in blanks" :key="'b' + n"><td></td><td></td><td></td><td></td></tr>
            </tbody>
          </table>
        </div>
        <div class="splitter"></div>
        <button v-for="s in sections" :key="s" class="fold" type="button"><span>{{ s }}</span><svg viewBox="0 0 10 8"><path d="M1 0.500L5 6.500 9 0.500" fill="none" stroke="#2d8cc0" stroke-width="2" /></svg></button>
      </aside>

      <div class="canvas">
        <svg class="scene" viewBox="317 126 649 511" preserveAspectRatio="xMidYMid meet" role="img" aria-label="model1.prt">
          <defs>
            <linearGradient id="wallL" gradientUnits="userSpaceOnUse" x1="468" y1="0" x2="530" y2="0"><stop offset="0" stop-color="#5d6a6c" /><stop offset=".3" stop-color="#667379" /><stop offset=".65" stop-color="#677479" /><stop offset="1" stop-color="#5b6768" /></linearGradient>
            <linearGradient id="wallR" gradientUnits="userSpaceOnUse" x1="682" y1="0" x2="834" y2="0"><stop offset="0" stop-color="#5b6768" /><stop offset=".22" stop-color="#50595b" /><stop offset=".42" stop-color="#5b6768" /><stop offset=".65" stop-color="#68767b" /><stop offset="1" stop-color="#8799a0" /></linearGradient>
            <linearGradient id="boss" gradientUnits="userSpaceOnUse" x1="532" y1="0" x2="659" y2="0"><stop offset="0" stop-color="#6f7d82" /><stop offset=".25" stop-color="#5d696b" /><stop offset=".45" stop-color="#4e5759" /><stop offset=".7" stop-color="#667377" /><stop offset="1" stop-color="#8a9ba2" /></linearGradient>
            <linearGradient id="bore" gradientUnits="userSpaceOnUse" x1="695" y1="0" x2="774" y2="0"><stop offset="0" stop-color="#86979d" /><stop offset=".3" stop-color="#5f6c70" /><stop offset=".55" stop-color="#4b5456" /><stop offset=".8" stop-color="#566164" /><stop offset="1" stop-color="#6b787c" /></linearGradient>
            <linearGradient id="topFace" x1="0" y1="0" x2="1" y2="1"><stop offset="0" stop-color="#bdd4db" /><stop offset=".45" stop-color="#c9e0e7" /><stop offset="1" stop-color="#cfe7ee" /></linearGradient>
            <filter id="soft1" x="-10%" y="-10%" width="120%" height="120%"><feGaussianBlur stdDeviation="1.300" /></filter>
            <filter id="soft2" x="-10%" y="-10%" width="120%" height="120%"><feGaussianBlur stdDeviation="2" /></filter>
            <path id="outer" d="M473.500 297C473 287 478 268 490 253C505 237 527 225 550 219C568 213.500 586 211 604 211C628 211 652 214 668 222C676 226 683 229 690 232C718 251 742 272 765 290C780 301 795 316 806 329C818 343 825 357 826 370C826 382 823 392 817 400C808 413 792 424 773 429.500C752 435 727 434 708 429C699 426.500 692 423.500 684 419L590 373.500C570 366 550 358 530 352C507 344 488 331 479 315C475 308 473.500 303 473.500 297Z" />
            <path id="inner" d="M480 288C481 273 488 260 499 250C517 233 545 219 577 213.500C605 210 640 212 668 222C676 226 682 229 688 232.500C716 252 742 273 765 293.500C778 305 791 318 802 331C813 345 819 356 819 368C819 383 812 396 801 405.500C788 416 767 422 742 422C722 422 704 417 689 409L637 382.500C618 374 600 365 583 359C566 352 549 347 532 342C512 334 494 321 486 308C482 301 480 295 480 288Z" />
            <path id="foot" d="M469 327C466 337 466 350 469 362C475 385 496 407 526 419.500L681 483.500C698 490 716 494 740 493.500C772 493 803 479 822 459C834 446 839 432 837 420L833 405Z" />
            <path id="wall" d="M474 300L470 327C467 336 468 351 471 362C478 385 499 406 527 416.500L682 479.500C698 486 716 490 738 489.500C770 488 798 475 818 456C832 442 836 428 833.500 412L826 368Z" />
            <clipPath id="clipOuter"><use href="#outer" /></clipPath>
            <clipPath id="clipFoot"><use href="#foot" /></clipPath>
            <clipPath id="clipBossFoot"><ellipse cx="596.300" cy="273" rx="69" ry="43.500" transform="rotate(-5 596.300 273)" /></clipPath>
            <clipPath id="clipBoss"><ellipse cx="595.500" cy="255.500" rx="63" ry="41" /></clipPath>
            <clipPath id="clipHole"><ellipse cx="735.200" cy="358.800" rx="46.600" ry="33.500" transform="rotate(4 735 359)" /></clipPath>
            <clipPath id="clipBore"><path d="M695 361C695 345 712 334 734 334C757 334 774.500 347 774.500 365C774 375 771 381 763 385C740 395 725 392 711 383C701 378 695 370 695 361Z" /></clipPath>
          </defs>

          <g stroke="#4d5758" stroke-width=".8" stroke-linejoin="round">
            <path d="M364.300 362.700L601 195.300 946.700 398.500 710.500 566Z" fill="#c9e2e9" />
            <path d="M364.300 362.700L710.500 566V590.300L364.300 387.500Z" fill="#5b6768" />
            <path d="M710.500 566L946.700 398.500 947.500 422.500 710.500 590.300Z" fill="#6f7d82" />
          </g>

          <use href="#foot" fill="#d8eef4" stroke="#4d5758" stroke-width=".8" />
          <g clip-path="url(#clipFoot)"><use href="#wall" fill="none" stroke="#6d7c80" stroke-width="3" filter="url(#soft1)" /></g>
          <use href="#wall" fill="#5b6768" stroke="#414a4b" stroke-width=".8" />
          <path d="M474 300L470 327C467 336 468 351 471 362C478 385 499 406 527 416.500L530 350Z" fill="url(#wallL)" />
          <path d="M684 417L682 479.500C698 486 716 490 738 489.500C770 488 798 475 818 456C832 442 836 428 833.500 412L826 368Z" fill="url(#wallR)" />

          <use href="#outer" fill="#657377" />
          <g clip-path="url(#clipOuter)">
            <use href="#inner" fill="none" stroke="#94a8ae" stroke-width="14" filter="url(#soft2)" />
            <use href="#inner" fill="none" stroke="#d9eff5" stroke-width="8" filter="url(#soft1)" />
          </g>
          <use href="#outer" fill="none" stroke="#4d5758" stroke-width=".8" />
          <use href="#inner" fill="url(#topFace)" stroke="#4d5758" stroke-width=".8" />
          <path d="M531.700 342Q529.500 347 529.500 353L527 419M689 409Q685 414 684.300 420L681.700 483" fill="none" stroke="#333b3c" stroke-width=".9" />

          <ellipse cx="596.300" cy="273" rx="69" ry="43.500" transform="rotate(-5 596.300 273)" fill="#d3e9f0" stroke="#4d5758" stroke-width=".8" />
          <g clip-path="url(#clipBossFoot)">
            <ellipse cx="595.500" cy="268" rx="65" ry="42.500" fill="#6b787d" filter="url(#soft1)" />
            <path d="M531 285Q558 315 598 314Q645 312 663 277" fill="none" stroke="#e6f8fc" stroke-width="3" filter="url(#soft1)" />
          </g>
          <path d="M532.500 256V270C536 294 562 308.500 596 308.500C630 308 655 292 658.500 268V255Z" fill="url(#boss)" stroke="#3e4748" stroke-width=".8" />
          <ellipse cx="595.500" cy="255.500" rx="63" ry="41" fill="#7b8b90" />
          <g clip-path="url(#clipBoss)">
            <ellipse cx="595.300" cy="250.700" rx="58.500" ry="38" fill="none" stroke="#dcf1f7" stroke-width="7" filter="url(#soft1)" />
          </g>
          <path d="M532.500 255.500A63 41 0 00658.500 255.500" fill="none" stroke="#3e4748" stroke-width=".9" />
          <path d="M532.500 255.500A63 41 0 01658.500 255.500" fill="none" stroke="#94a6ac" stroke-width=".6" />
          <ellipse cx="595.300" cy="250.700" rx="57" ry="36.500" fill="#c9e2e9" stroke="#4d5758" stroke-width=".8" />

          <ellipse cx="735.200" cy="358.800" rx="46.600" ry="33.500" transform="rotate(4 735 359)" fill="#d9eef4" />
          <g clip-path="url(#clipHole)">
            <path d="M695 363C695 345 712 334 734 334C757 334 774.500 347 774.500 365" fill="none" stroke="#7f9095" stroke-width="7" filter="url(#soft1)" />
            <g clip-path="url(#clipBore)">
              <path d="M690 325h90v70h-90z" fill="url(#bore)" />
              <path d="M708 385Q737 370 767 386L760 398H714Z" fill="#e4f5fa" stroke="#4d5758" stroke-width=".8" />
              <path d="M711 389Q737 373.500 764 388L758 398H716Z" fill="#c9e2e9" stroke="#6e7c80" stroke-width=".7" />
            </g>
            <path d="M695 361C695 345 712 334 734 334C757 334 774.500 347 774.500 365C774 375 771 381 763 385M711 383C701 378 695 370 695 361" fill="none" stroke="#3e4748" stroke-width=".8" />
          </g>
          <ellipse cx="735.200" cy="358.800" rx="46.600" ry="33.500" transform="rotate(4 735 359)" fill="none" stroke="#4d5758" stroke-width=".8" />

          <path d="M357 581l11-6.500 12 6v13.500l-12 8-11-7z" fill="#c6c6c8" stroke="#9b9c9e" stroke-width=".8" />
          <path d="M357 581l12 6.500 11-7M369 587.500V602M357 595l12-7" fill="none" stroke="#a9aaac" stroke-width=".8" />
          <path d="M357 595l17-11" stroke="#9fc4a2" stroke-width="2" /><path d="M378 581l-6 2 2 3z" fill="#9fc4a2" />
          <path d="M356.500 595V578" stroke="#1530a8" stroke-width="2" /><path d="M356.500 574l2.500 6h-5z" fill="#1530a8" />
          <path d="M358 596l14 8" stroke="#d42a2a" stroke-width="2" /><path d="M377 607l-7-1 3-4z" fill="#d42a2a" />
          <circle cx="356.500" cy="595.500" r="2" fill="#ccc" stroke="#666" stroke-width=".7" />
          <g class="axes"><text x="353.500" y="575" fill="#5b6cf0">Z</text><text x="375" y="583" fill="#8db891">Y</text><text x="377" y="612" fill="#d84a4a">X</text></g>
        </svg>
      </div>
    </main>

    <footer class="status"></footer>
  </div>
</template>

<style>
html, body { margin: 0; }
</style>

<style scoped>
.app {
  display: flex;
  flex-direction: column;
  height: 100vh;
  overflow: hidden;
  background: #fff;
  color: #333;
  font: 10px/12px "Noto Sans", "Noto Sans CJK KR", sans-serif;
}
.sprite { position: absolute; }
button, select { font: inherit; color: inherit; }
button { display: flex; align-items: center; padding: 0; border: 0; background: none; white-space: nowrap; }
h1, h2, ul { margin: 0; padding: 0; font: inherit; list-style: none; }
svg { display: block; flex: none; }
.i10 { width: 10px; height: 10px; }
.i11 { width: 11px; height: 11px; }
.i12 { width: 12px; height: 12px; }
.i16 { width: 16px; height: 16px; }
.i20 { width: 20px; height: 20px; }
.caret { width: 5px; height: 4px; }
.caret-bar { width: 5px; height: 6px; }
.vr { flex: none; width: 1px; height: 12px; margin: 0 2px; background: #d4d4d4; }
.vr.gap { margin: 0 5px; }
.tool { flex: none; justify-content: center; width: 15px; height: 14px; }
.tool.wide { width: 16px; }
.drop { flex: none; justify-content: center; width: 8px; height: 14px; }

.titlebar { flex: none; display: flex; height: 19px; }
.quick { display: flex; align-items: center; flex: 3 0 0; white-space: nowrap; }
.logo { width: 25px; padding-left: 2px; color: #8fa5b0; font: bold 17px/19px "Liberation Sans", sans-serif; }
.win { gap: 1px; }
.win .caret { margin-left: 1px; }
.title { flex: 2 0 0; line-height: 19px; white-space: nowrap; }

.tabs { flex: none; display: flex; height: 19px; background: #c8d7d5; }
.tab { padding: 0 8px; font-size: 11px; line-height: 19px; }
.tab.file { justify-content: center; width: 57px; padding: 0; background: #558480; color: #fff; }
.tab.active { background: #fff; color: #2d94c4; }

.ribbon { flex: none; display: flex; height: 65px; border-bottom: 1px solid #cfcfcf; overflow: hidden; }
.group { flex: none; display: flex; flex-direction: column; }
.group .body { display: grid; height: 50px; padding-top: 3px; border-right: 1px solid #dcdcdc; }
.g-sketch { grid-template-columns: 42px 70px 15px; }
.g-feature { grid-template-columns: 30px 26px 26px 38px 70px 38px 66px 39px; padding-left: 6px; }
.g-sync { grid-template-columns: 44px 54px 39px; }
.g-surface { grid-template-columns: 54px 62px 39px; }
.g-assembly { grid-template-columns: 57px 30px 93px; padding-left: 5px; }
.group footer { display: flex; align-items: center; height: 12px; padding-right: 3px; color: #3d94bd; border-right: 1px solid #dcdcdc; }
.group footer span { flex: 1; text-align: center; }
.big { flex-direction: column; align-items: center; min-width: 0; }
.big > svg { margin: 0 0 3px; }
.big span { display: flex; align-items: center; gap: 2px; line-height: 12px; }
.big:disabled { color: #c6c6c6; }
.big .below { height: 8px; }
.big .frame { justify-content: center; width: 22px; height: 20px; margin-bottom: 3px; border: 1px solid #ececec; border-radius: 2px; box-sizing: border-box; }
.gallery { display: grid; grid-template-columns: repeat(3, 1fr); grid-template-rows: 1fr 1fr; height: 46px; border: 1px solid #dcdcdc; box-sizing: border-box; }
.gallery button { justify-content: center; }
.scroller { display: flex; flex-direction: column; height: 46px; }
.scroller button { flex: 1; justify-content: center; }
.caret.up { transform: rotate(180deg); opacity: .5; }
.list { display: flex; flex-direction: column; }
.list li { height: 16px; }
.list button { gap: 2px; height: 12px; }
.list .caret { margin-left: 3px; }

.toolbar { flex: none; display: flex; align-items: center; height: 21px; padding-left: 5px; border-bottom: 1px solid #b4b8bb; overflow: hidden; }
.menu { gap: 1px; }
.menu .caret { margin-left: 1px; }
.toolbar .vr { height: 16px; }
.picker { flex: none; display: grid; align-items: center; width: 101px; height: 15px; margin: 0 3px; border: 1px solid #a8a8a8; box-sizing: border-box; }
.picker.narrow { width: 96px; }
.picker select { grid-area: 1 / 1; appearance: none; width: 100%; height: 13px; padding: 0 0 0 2px; border: 0; background: none; color: #222; line-height: 13px; }
.picker .caret { grid-area: 1 / 1; justify-self: end; margin-right: 4px; pointer-events: none; }
.tool.on { margin-right: 1px; background: #c8d7d5; }

.work { flex: 1; display: flex; min-height: 0; }
.resources { flex: none; display: flex; flex-direction: column; width: 20px; background: #dcdcdc; border-right: 1px solid #bdbdbd; }
.resources button { flex: none; justify-content: center; width: 21px; height: 26px; padding-left: 2px; box-sizing: border-box; }
.resources svg { width: 16px; height: 16px; }
.resources .gear { height: 16px; margin-bottom: 11px; padding-left: 0; }
.resources .gear svg { width: 13px; height: 13px; }
.resources .current { height: 28px; background: #fff; }
.resources .r-info, .resources .r-web, .resources .clock { height: 34px; }
.resources .r-info { margin-top: 4px; }
.resources .clock { height: 30px; }

.panel { flex: none; display: flex; flex-direction: column; width: 286px; padding: 0 5px 3px 3px; border-right: 2px solid #b5b7ba; }
.panel-head { flex: none; display: flex; align-items: center; justify-content: space-between; height: 20px; padding: 0 4px 0 3px; }
.maximize { width: 10px; height: 9px; border: 1px solid #333; border-top-width: 2px; }
.tree { flex: 1; min-height: 0; overflow: hidden; border: 1px solid #dedede; border-bottom: 0; }
table { width: 100%; table-layout: fixed; border-collapse: separate; border-spacing: 0; }
.c-name { width: 127px; }
.c-new { width: 63px; }
.c-note { width: 64px; }
th { height: 16px; padding: 0 4px; background: #efefef; border-right: 1px solid #d9d9d9; border-bottom: 1px solid #d9d9d9; box-sizing: border-box; font-weight: 400; text-align: left; line-height: 14px; white-space: nowrap; }
.sort { display: inline-block; width: 6px; height: 4px; margin: 0 0 3px 8px; }
tbody tr { height: 15px; }
tbody tr:nth-child(5n) { height: 16px; }
tbody tr:nth-child(even) { background: #f9f9f9; }
td { padding: 0 0 0 3px; border-right: 1px solid #ececec; border-bottom: 1px solid #f2f2f2; box-sizing: border-box; }
td:first-child { padding-left: 0; }
.node { display: flex; align-items: center; height: 14px; overflow: hidden; }
.node.child { padding-left: 12px; }
.node span { padding-left: 1px; line-height: 14px; white-space: nowrap; }
.twig { width: 12px; height: 16px; }
.dim { color: #a8a8a8; }
.bold { font-weight: 700; }
input[type="checkbox"] { flex: none; display: grid; appearance: none; width: 9px; height: 9px; margin: 0 0 0 1px; border: 1px solid #333; background: #fff; }
input[type="checkbox"]:checked::before { content: ""; background: #1eb53a; clip-path: polygon(0 50%, 20% 30%, 40% 55%, 85% 0, 100% 15%, 45% 100%); }
.splitter { flex: none; height: 3px; background: #c6c6c6; border-top: 1px solid #aaa; box-sizing: border-box; }
.fold { flex: none; justify-content: space-between; height: 18px; padding: 0 3px 0 5px; border-bottom: 1px solid #c9c9c9; color: #4a9cc4; font-size: 12px; line-height: 16px; }
.fold svg { width: 10px; height: 8px; }

.canvas { flex: 1; min-width: 0; background: linear-gradient(#b8b9bb, #e6e7e9 75%); }
.scene { width: 100%; height: 100%; }
.axes { font: 8px "Liberation Sans", sans-serif; }

.status { flex: none; height: 16px; border-top: 1px solid #c0c0c0; border-bottom: 2px solid #10161f; box-sizing: border-box; }
</style>
